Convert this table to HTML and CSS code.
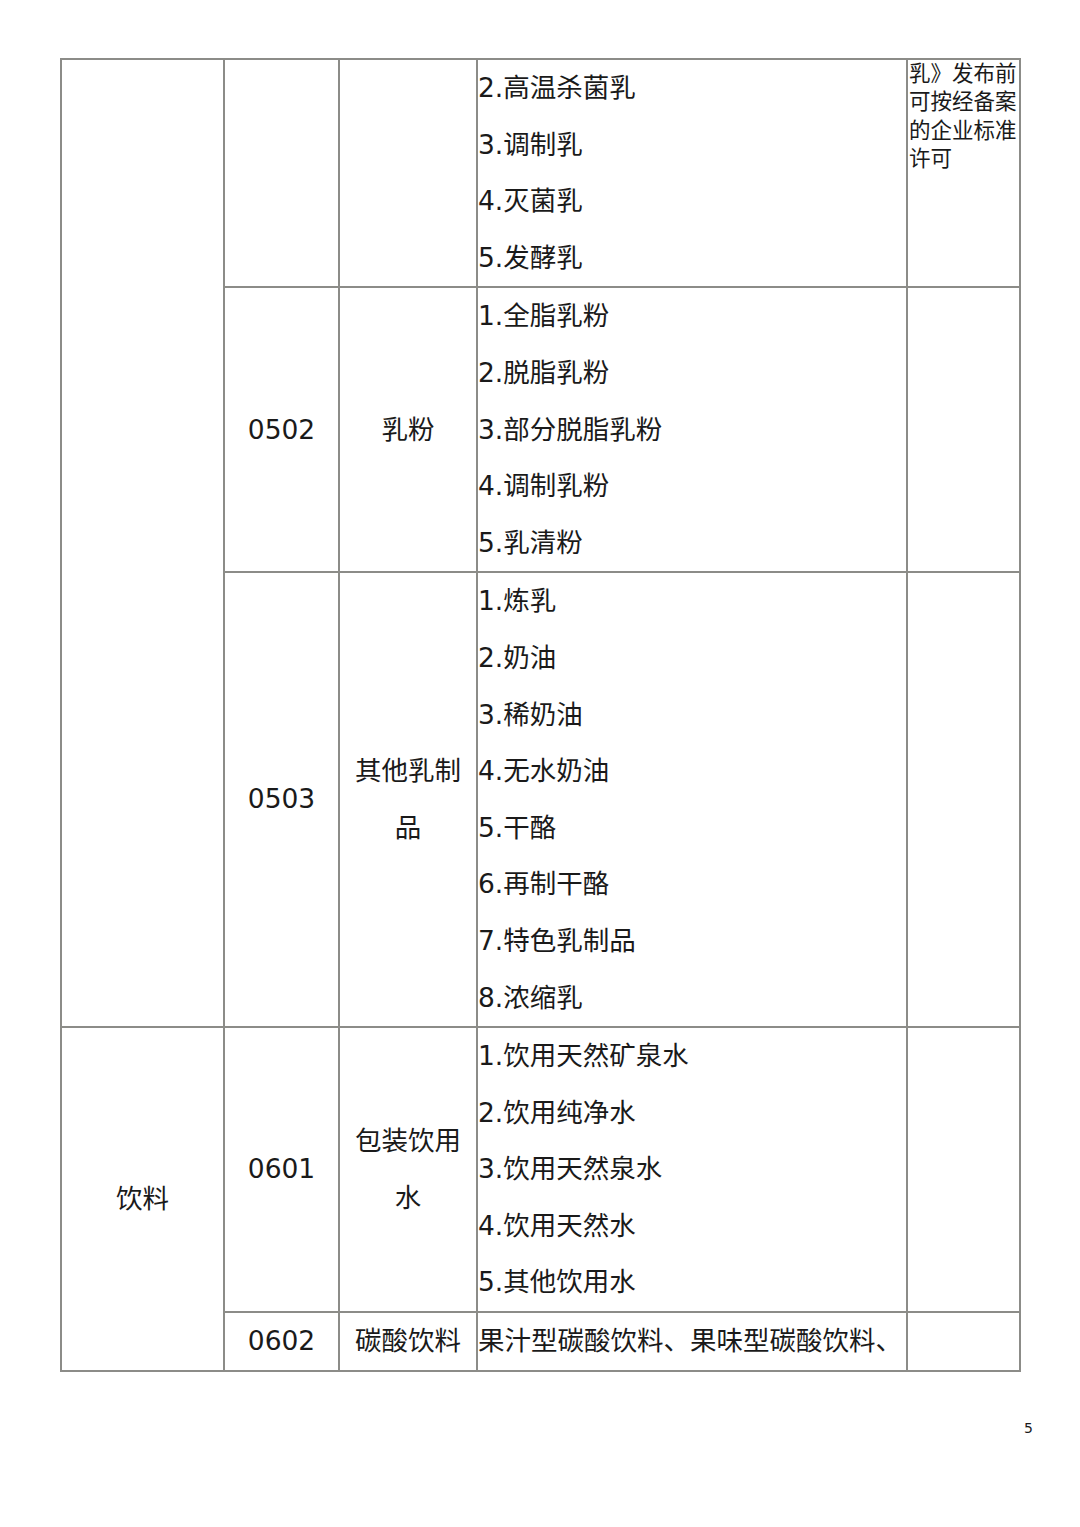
FILE: index.html
```html
<!DOCTYPE html>
<html lang="zh-CN">
<head>
<meta charset="utf-8">
<title>食品生产许可分类目录</title>
<link rel="stylesheet" href="styles.css">
</head>
<body>
<div class="page">
  <table class="grid">
    <colgroup>
      <col class="c1"><col class="c2"><col class="c3"><col class="c4"><col class="c5">
    </colgroup>
    <tr class="r1">
      <td class="cat" rowspan="3"></td>
      <td class="code"></td>
      <td class="name"></td>
      <td class="items">2.高温杀菌乳<br>3.调制乳<br>4.灭菌乳<br>5.发酵乳</td>
      <td class="note">乳》发布前可按经备案的企业标准许可</td>
    </tr>
    <tr>
      <td class="code">0502</td>
      <td class="name">乳粉</td>
      <td class="items">1.全脂乳粉<br>2.脱脂乳粉<br>3.部分脱脂乳粉<br>4.调制乳粉<br>5.乳清粉</td>
      <td class="note"></td>
    </tr>
    <tr>
      <td class="code">0503</td>
      <td class="name">其他乳制品</td>
      <td class="items">1.炼乳<br>2.奶油<br>3.稀奶油<br>4.无水奶油<br>5.干酪<br>6.再制干酪<br>7.特色乳制品<br>8.浓缩乳</td>
      <td class="note"></td>
    </tr>
    <tr>
      <td class="cat" rowspan="2">饮料</td>
      <td class="code">0601</td>
      <td class="name">包装饮用水</td>
      <td class="items">1.饮用天然矿泉水<br>2.饮用纯净水<br>3.饮用天然泉水<br>4.饮用天然水<br>5.其他饮用水</td>
      <td class="note"></td>
    </tr>
    <tr>
      <td class="code">0602</td>
      <td class="name">碳酸饮料</td>
      <td class="items">果汁型碳酸饮料、果味型碳酸饮料、</td>
      <td class="note"></td>
    </tr>
  </table>
  <div class="pagenum">5</div>
</div>
</body>
</html>
```
FILE: styles.css
```css
html, body {
  margin: 0;
  padding: 0;
  background: #ffffff;
}
body {
  font-family: "DejaVu Sans", "Noto Sans CJK SC", sans-serif;
  color: #1a1a1a;
}
.page {
  padding: 58px 0 0 60px;
  width: 1020px;
}
.grid {
  border-collapse: collapse;
  table-layout: fixed;
  width: 959px;
}
.grid col.c1 { width: 163px; }
.grid col.c2 { width: 115px; }
.grid col.c3 { width: 138px; }
.grid col.c4 { width: 430px; }
.grid col.c5 { width: 113px; }
.grid td {
  border: 2px solid #8c8c88;
  padding: 0;
  font-size: 26.5px;
  line-height: 56.6px;
  vertical-align: middle;
}
.cat {
  text-align: center;
  font-size: 25px;
}
.code {
  text-align: center;
}
.grid td.name {
  text-align: center;
  padding: 0 5px;
}
.grid td.items {
  padding-left: 0;
  white-space: nowrap;
  overflow: hidden;
}
.grid td.note {
  vertical-align: top;
  font-size: 21.5px;
  line-height: 28.3px;
  padding: 0 0 0 1px;
}
.note-inner {
  margin-top: -1px;
}
.pagenum {
  text-align: right;
  font-size: 14px;
  line-height: 20px;
  margin-top: 46px;
  padding-right: 47px;
}
```
